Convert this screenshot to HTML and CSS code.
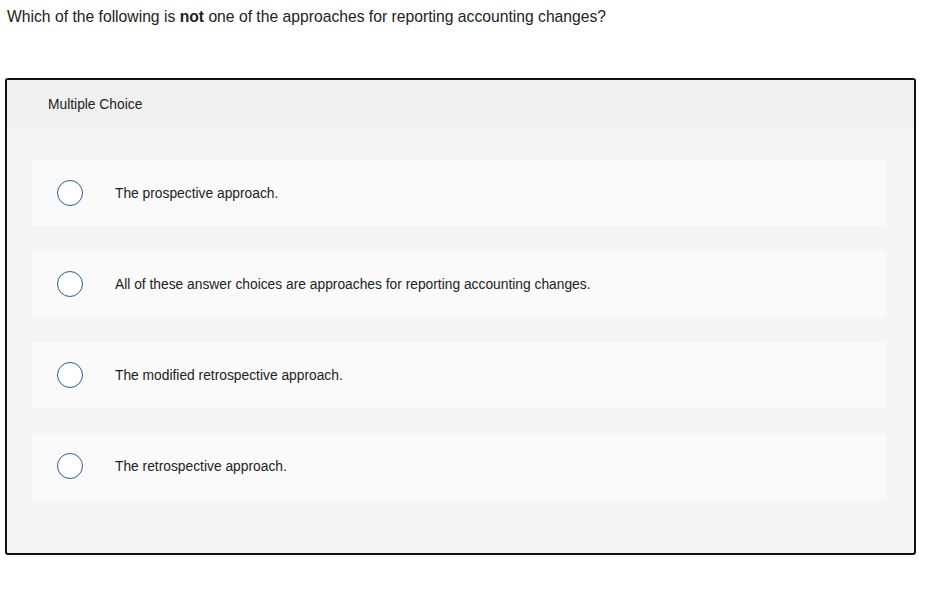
FILE: index.html
```html
<!DOCTYPE html>
<html>
<head>
  <title>Multiple Choice</title>
  <link rel="stylesheet" href="styles.css">
</head>
<body>
  <p class="question">Which of the following is <b>not</b> one of the approaches for reporting accounting changes?</p>

  <div class="choice-box">
    <div class="choice-header">Multiple Choice</div>
    <div class="choice-list">
      <label class="choice">
        <span class="radio"></span>
        <span class="choice-text">The prospective approach.</span>
      </label>
      <label class="choice">
        <span class="radio"></span>
        <span class="choice-text">All of these answer choices are approaches for reporting accounting changes.</span>
      </label>
      <label class="choice">
        <span class="radio"></span>
        <span class="choice-text">The modified retrospective approach.</span>
      </label>
      <label class="choice">
        <span class="radio"></span>
        <span class="choice-text">The retrospective approach.</span>
      </label>
    </div>
  </div>
</body>
</html>
```

FILE: styles.css
```css
body {
  font-family: "Liberation Sans", Arial, sans-serif;
  margin: 0;
  padding: 0;
  color: #222;
  background: #fff;
}

.question {
  margin: 0;
  padding: 8px 7px 0;
  font-size: 15.7px;
  line-height: 18px;
}

.question b {
  font-weight: bold;
}

.choice-box {
  width: 907px;
  margin: 52px 0 0 5px;
  border: 2px solid #111;
  border-radius: 3px;
  background: #f5f5f5;
}

.choice-header {
  height: 48px;
  padding-left: 41px;
  display: flex;
  align-items: center;
  font-size: 13.8px;
  background: #f0f0f0;
}

.choice-list {
  display: flex;
  flex-direction: column;
  gap: 25px;
  padding: 32px 28px 54px 25px;
}

.choice {
  height: 66px;
  display: flex;
  align-items: center;
  padding-left: 25px;
  background: #fafafa;
  cursor: pointer;
}

.radio {
  width: 24px;
  height: 24px;
  border: 1.5px solid #2d5f8f;
  border-radius: 50%;
  background: #fff;
  flex-shrink: 0;
}

.choice-text {
  margin-left: 32px;
  font-size: 13.8px;
  color: #222;
}
```
